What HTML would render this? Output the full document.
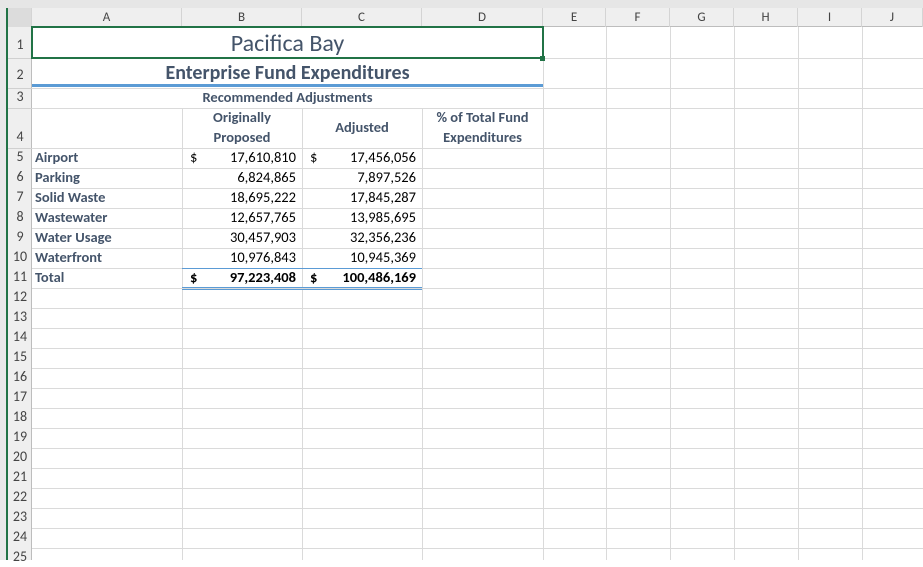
<!DOCTYPE html>
<html><head><style>
body{margin:0;width:923px;height:560px;overflow:hidden;background:#fff;font-family:"Liberation Sans",Calibri,sans-serif;position:relative}
div{position:absolute;box-sizing:border-box}
.t{font-family:"Carlito","Liberation Sans",sans-serif;font-size:14.5px;color:#44546a;font-weight:bold;white-space:nowrap}
.rh{left:8px;width:24px;font-family:"Carlito","Liberation Sans",sans-serif;font-size:14px;color:#444;text-align:center}
.ch{top:8px;height:19px;font-family:"Carlito","Liberation Sans",sans-serif;font-size:13px;color:#444;text-align:center;line-height:19px;border-right:1px solid #d4d4d4}
</style></head><body>
<div style="left:0;top:0;width:923px;height:8px;background:#e6e6e6"></div>
<div style="left:0;top:8px;width:7px;height:552px;background:#e8e8e8"></div>
<div style="left:6px;top:8px;width:2px;height:552px;background:#217346"></div>
<div style="left:8px;top:8px;width:915px;height:19px;background:#efefef;border-bottom:1px solid #bdbdbd"></div>
<div style="left:8px;top:27px;width:24px;height:533px;background:#efefef;border-right:1px solid #bdbdbd"></div>
<div class="ch" style="left:8px;width:24px;background:#dcdcdc"></div>
<div class="ch" style="left:32px;width:150px">A</div>
<div class="ch" style="left:182px;width:120px">B</div>
<div class="ch" style="left:302px;width:120px">C</div>
<div class="ch" style="left:422px;width:121px">D</div>
<div class="ch" style="left:543px;width:63px">E</div>
<div class="ch" style="left:606px;width:64px">F</div>
<div class="ch" style="left:670px;width:64px">G</div>
<div class="ch" style="left:734px;width:64px">H</div>
<div class="ch" style="left:798px;width:64px">I</div>
<div class="ch" style="left:862px;width:61px">J</div>
<svg style="position:absolute;left:0;top:0" width="923" height="560">
<g stroke="#dadada" stroke-width="1">
<line x1="32" y1="58.5" x2="923" y2="58.5"/><line x1="32" y1="88.5" x2="923" y2="88.5"/><line x1="32" y1="108.5" x2="923" y2="108.5"/><line x1="32" y1="148.5" x2="923" y2="148.5"/>
<line x1="32" y1="168.5" x2="923" y2="168.5"/><line x1="32" y1="188.5" x2="923" y2="188.5"/><line x1="32" y1="208.5" x2="923" y2="208.5"/><line x1="32" y1="228.5" x2="923" y2="228.5"/><line x1="32" y1="248.5" x2="923" y2="248.5"/><line x1="32" y1="268.5" x2="923" y2="268.5"/><line x1="32" y1="288.5" x2="923" y2="288.5"/><line x1="32" y1="308.5" x2="923" y2="308.5"/><line x1="32" y1="328.5" x2="923" y2="328.5"/><line x1="32" y1="348.5" x2="923" y2="348.5"/><line x1="32" y1="368.5" x2="923" y2="368.5"/><line x1="32" y1="388.5" x2="923" y2="388.5"/><line x1="32" y1="408.5" x2="923" y2="408.5"/><line x1="32" y1="428.5" x2="923" y2="428.5"/><line x1="32" y1="448.5" x2="923" y2="448.5"/><line x1="32" y1="468.5" x2="923" y2="468.5"/><line x1="32" y1="488.5" x2="923" y2="488.5"/><line x1="32" y1="508.5" x2="923" y2="508.5"/><line x1="32" y1="528.5" x2="923" y2="528.5"/><line x1="32" y1="548.5" x2="923" y2="548.5"/>
<line x1="182.5" y1="108" x2="182.5" y2="560"/><line x1="302.5" y1="108" x2="302.5" y2="560"/><line x1="422.5" y1="108" x2="422.5" y2="560"/>
<line x1="543.5" y1="27" x2="543.5" y2="560"/><line x1="606.5" y1="27" x2="606.5" y2="560"/><line x1="670.5" y1="27" x2="670.5" y2="560"/><line x1="734.5" y1="27" x2="734.5" y2="560"/><line x1="798.5" y1="27" x2="798.5" y2="560"/><line x1="862.5" y1="27" x2="862.5" y2="560"/>
</g>
<g stroke="#d0d0d0"><line x1="8" y1="58.5" x2="32" y2="58.5"/><line x1="8" y1="88.5" x2="32" y2="88.5"/><line x1="8" y1="108.5" x2="32" y2="108.5"/><line x1="8" y1="148.5" x2="32" y2="148.5"/></g>
<rect x="32" y="84" width="511" height="3" fill="#5b9bd5"/>
<line x1="182" y1="268.5" x2="422" y2="268.5" stroke="#5b9bd5"/>
<line x1="182" y1="287.5" x2="422" y2="287.5" stroke="#5b9bd5"/>
<line x1="182" y1="289.5" x2="422" y2="289.5" stroke="#5b9bd5"/>
<rect x="32" y="27" width="511" height="31" fill="none" stroke="#217346" stroke-width="2"/>
<rect x="540" y="56" width="5" height="5" fill="#217346"/>
</svg>
<div class="rh" style="top:27px;height:31px;line-height:36px">1</div>
<div class="rh" style="top:58px;height:30px;line-height:34px">2</div>
<div class="rh" style="top:87px;height:20px;line-height:20px">3</div>
<div class="rh" style="top:107px;height:40px;line-height:60px">4</div>
<div class="rh" style="top:147px;line-height:20px">5</div><div class="rh" style="top:167px;line-height:20px">6</div><div class="rh" style="top:187px;line-height:20px">7</div><div class="rh" style="top:207px;line-height:20px">8</div><div class="rh" style="top:227px;line-height:20px">9</div><div class="rh" style="top:247px;line-height:20px">10</div><div class="rh" style="top:267px;line-height:20px">11</div><div class="rh" style="top:287px;line-height:20px">12</div><div class="rh" style="top:307px;line-height:20px">13</div><div class="rh" style="top:327px;line-height:20px">14</div><div class="rh" style="top:347px;line-height:20px">15</div><div class="rh" style="top:367px;line-height:20px">16</div><div class="rh" style="top:387px;line-height:20px">17</div><div class="rh" style="top:407px;line-height:20px">18</div><div class="rh" style="top:427px;line-height:20px">19</div><div class="rh" style="top:447px;line-height:20px">20</div><div class="rh" style="top:467px;line-height:20px">21</div><div class="rh" style="top:487px;line-height:20px">22</div><div class="rh" style="top:507px;line-height:20px">23</div><div class="rh" style="top:527px;line-height:20px">24</div><div class="rh" style="top:547px;line-height:20px">25</div>
<div style="left:32px;top:29px;width:511px;text-align:center;font-family:'Carlito','Liberation Sans',sans-serif;font-size:24px;color:#44546a;line-height:30px">Pacifica Bay</div>
<div class="t" style="left:32px;top:61px;width:511px;text-align:center;font-size:20px;line-height:24px">Enterprise Fund Expenditures</div>
<div class="t" style="left:32px;top:87px;width:511px;text-align:center;line-height:20px">Recommended Adjustments</div>
<div class="t" style="left:182px;top:107px;width:120px;text-align:center;line-height:20px">Originally<br>Proposed</div>
<div class="t" style="left:302px;top:117px;width:120px;text-align:center;line-height:20px">Adjusted</div>
<div class="t" style="left:422px;top:107px;width:121px;text-align:center;line-height:20px">% of Total Fund<br>Expenditures</div>
<div class="t" style="left:35px;top:147px;line-height:20px">Airport<br>Parking<br>Solid Waste<br>Wastewater<br>Water Usage<br>Waterfront<br>Total</div>
<div class="t" style="left:182px;top:147px;width:114px;text-align:right;line-height:20px;font-weight:normal;color:#000">17,610,810<br>6,824,865<br>18,695,222<br>12,657,765<br>30,457,903<br>10,976,843<br><b>97,223,408</b></div>
<div class="t" style="left:302px;top:147px;width:114px;text-align:right;line-height:20px;font-weight:normal;color:#000">17,456,056<br>7,897,526<br>17,845,287<br>13,985,695<br>32,356,236<br>10,945,369<br><b>100,486,169</b></div>
<div class="t" style="left:190px;top:147px;line-height:20px;font-weight:normal;color:#000">$</div>
<div class="t" style="left:310px;top:147px;line-height:20px;font-weight:normal;color:#000">$</div>
<div class="t" style="left:190px;top:267px;line-height:20px;color:#000">$</div>
<div class="t" style="left:310px;top:267px;line-height:20px;color:#000">$</div>
</body></html>
